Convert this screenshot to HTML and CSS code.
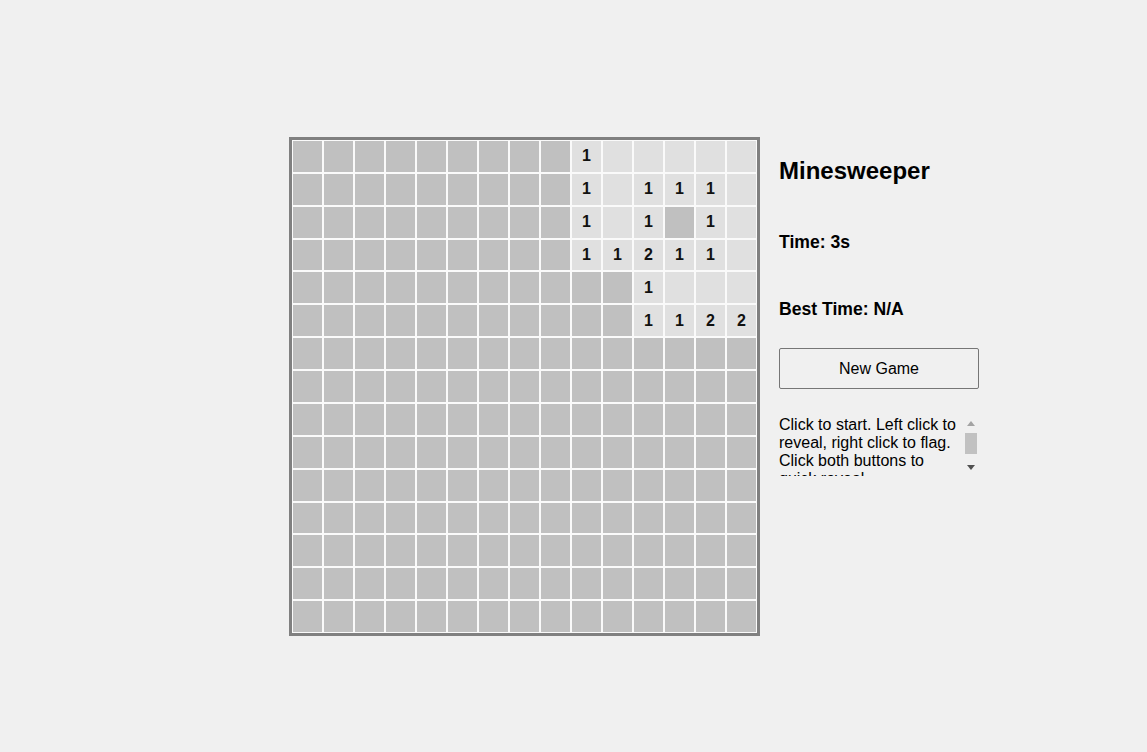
FILE: index.html
```html
<!DOCTYPE html>
<html>
<head>
<meta charset="utf-8">
<title>Minesweeper</title>
<link rel="stylesheet" href="styles.css">
</head>
<body>
<main class="game">
  <div class="board" id="board"></div>
  <aside class="sidebar">
    <h2 class="title">Minesweeper</h2>
    <div class="stat">Time: 3s</div>
    <div class="stat">Best Time: N/A</div>
    <button class="new-game">New Game</button>
    <div class="info">
      <div class="info-text">Click to start. Left click to reveal, right click to flag. Click both buttons to quick reveal.</div>
      <div class="scrollbar" aria-hidden="true">
        <div class="sb-btn sb-up">
          <svg width="8" height="5" viewBox="0 0 8 5"><path d="M0 5 L4 0 L8 5 Z" fill="#a3a3a3"/></svg>
        </div>
        <div class="sb-track"><div class="sb-thumb"></div></div>
        <div class="sb-btn sb-down">
          <svg width="8" height="5" viewBox="0 0 8 5"><path d="M0 0 L8 0 L4 5 Z" fill="#505050"/></svg>
        </div>
      </div>
    </div>
  </aside>
</main>
<script src="script.js"></script>
</body>
</html>
```

FILE: script.js
```js
(function () {
  // '.' hidden, ' ' revealed empty, digit revealed number
  var rows = [
    ".........1     ",
    ".........1 111 ",
    ".........1 1.1 ",
    ".........11211 ",
    "...........1   ",
    "...........1122"
  ];
  var board = document.getElementById('board');
  for (var r = 0; r < 15; r++) {
    var line = rows[r] || "...............";
    for (var c = 0; c < 15; c++) {
      var ch = line.charAt(c);
      var cell = document.createElement('div');
      cell.className = 'cell';
      if (ch !== '.') {
        cell.className += ' revealed';
        if (ch !== ' ') cell.textContent = ch;
      }
      board.appendChild(cell);
    }
  }
})();
```

FILE: styles.css
```css
html, body {
  margin: 0;
  padding: 0;
  background: #f0f0f0;
  font-family: "Liberation Sans", Arial, sans-serif;
  color: #000;
}

.game {
  display: flex;
  align-items: flex-start;
  gap: 19px;
  padding: 137px 0 0 289px;
}

.board {
  display: grid;
  grid-template-columns: repeat(15, 31px);
  grid-template-rows: repeat(15, 1fr);
  height: 493px;
  border: 3px solid #808080;
  background: #fff;
}

.cell {
  box-sizing: border-box;
  border: 1px solid #fafafa;
  background: #c0c0c0;
  display: flex;
  align-items: center;
  justify-content: center;
  font-weight: bold;
  font-size: 16px;
  color: #111;
}

.cell.revealed {
  background: #e0e0e0;
}

.sidebar {
  width: 200px;
  display: flex;
  flex-direction: column;
  align-items: stretch;
}

.title {
  font-size: 24px;
  font-weight: bold;
  margin: 20px 0 0;
  line-height: 27.6px;
}

.stat {
  font-size: 17.6px;
  font-weight: bold;
  line-height: 20px;
  margin-top: 47px;
}

.new-game {
  margin-top: 29px;
  height: 41px;
  font-family: "Liberation Sans", Arial, sans-serif;
  font-size: 16px;
  color: #000;
  background: #f0f0f0;
  border: 1px solid #767676;
  border-radius: 2px;
  padding: 1px 0 0;
}

.info {
  margin-top: 26px;
  height: 61px;
  display: flex;
}

.info-text {
  flex: 1;
  overflow: hidden;
  font-size: 16px;
  line-height: 18px;
  padding-top: 1px;
}

.scrollbar {
  width: 14px;
  margin-right: 1px;
  display: flex;
  flex-direction: column;
  background: #f0f0f0;
}

.sb-btn {
  display: flex;
  justify-content: center;
}

.sb-up {
  align-items: flex-end;
  padding-bottom: 4px;
  height: 11px;
}

.sb-down {
  align-items: flex-start;
  padding-top: 4px;
  height: 11px;
}

.sb-btn svg {
  display: block;
}

.sb-track {
  flex: 1;
  padding: 3px 1px 7px 1px;
  display: flex;
}

.sb-thumb {
  flex: 1;
  background: #c1c1c1;
}
```
